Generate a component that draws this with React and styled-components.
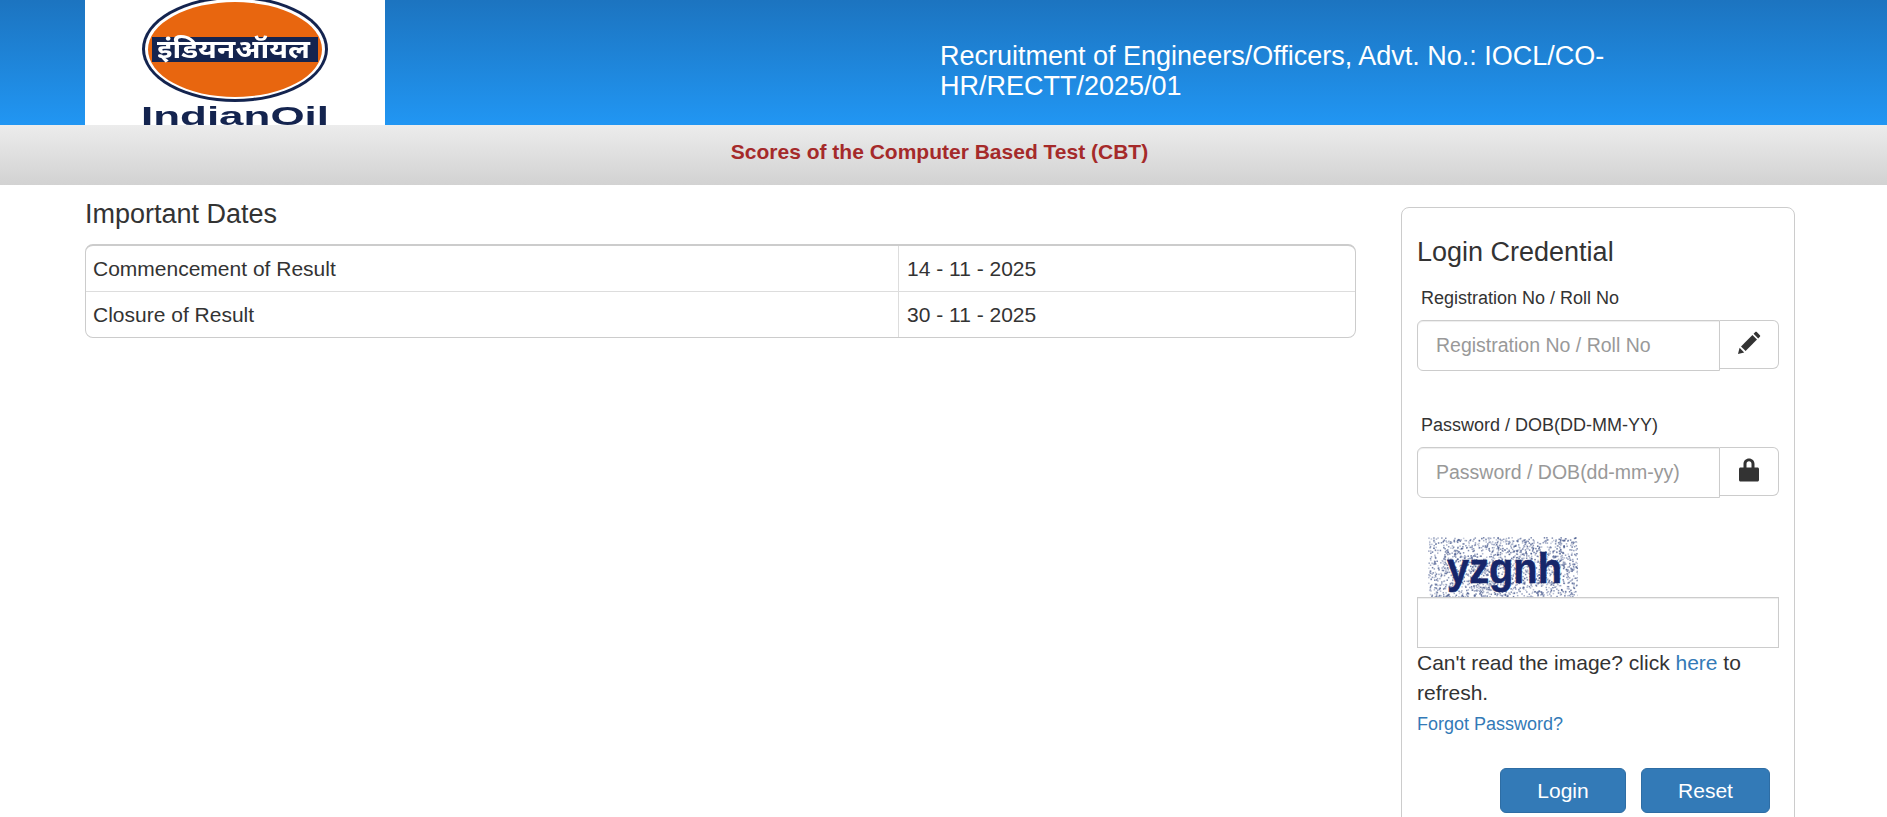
import React from 'react';
import styled, { createGlobalStyle } from 'styled-components';

const GlobalStyle = createGlobalStyle`
  html, body {
    margin: 0;
    padding: 0;
    background: #fff;
    color: #333;
    font-family: "Liberation Sans", Arial, sans-serif;
    overflow: hidden;
  }
  * {
    box-sizing: border-box;
  }
`;

const Header = styled.header`
  display: flex;
  height: 125px;
  padding-left: 85px;
  background: linear-gradient(to bottom, #1c74c0, #2196f3);
`;

const LogoBox = styled.div`
  width: 300px;
  height: 125px;
  overflow: hidden;
  background: #fff;

  svg {
    display: block;
    filter: blur(0.4px);
  }
`;

const Title = styled.h1`
  width: 700px;
  margin: 41px 0 0 555px;
  font-size: 27px;
  font-weight: normal;
  line-height: 30px;
  color: #fff;
`;

const Band = styled.div`
  height: 60px;
  padding-right: 8px;
  line-height: 54px;
  text-align: center;
  font-size: 21px;
  font-weight: bold;
  color: #a52a2a;
  background: linear-gradient(to bottom, #ececec, #d2d2d2);
`;

const Content = styled.main`
  display: grid;
  grid-template-columns: 1271px 394px;
  column-gap: 45px;
  padding: 15px 0 0 85px;
`;

const SectionTitle = styled.h2`
  margin: 0 0 16px;
  font-size: 27px;
  font-weight: normal;
  line-height: 28px;
  color: #333;
`;

const DatesTable = styled.div`
  border: 1px solid #ccc;
  border-top-width: 2px;
  border-radius: 8px;
  overflow: hidden;
`;

const DateRow = styled.div`
  display: grid;
  grid-template-columns: 812px 1fr;
  height: ${(p) => (p.$first ? '45px' : '46px')};
  font-size: 21px;
  line-height: 45px;
  border-top: ${(p) => (p.$first ? 'none' : '1px solid #ddd')};
`;

const DateCell = styled.div`
  padding-left: ${(p) => (p.$value ? '8px' : '7px')};
  border-left: ${(p) => (p.$value ? '1px solid #ddd' : 'none')};
`;

const Panel = styled.aside`
  height: 700px;
  margin-top: 7px;
  padding: 29px 15px 0;
  border: 1px solid #ccc;
  border-radius: 8px;
`;

const PanelTitle = styled.h2`
  margin: 0 0 21px;
  font-size: 27px;
  font-weight: normal;
  line-height: 30px;
`;

const FieldLabel = styled.label`
  display: block;
  margin: 0 0 12px 4px;
  font-size: 18px;
  line-height: 20px;
`;

const InputGroup = styled.div`
  display: flex;
  margin-bottom: 44px;
`;

const TextInput = styled.input`
  flex: 1;
  min-width: 0;
  height: 51px;
  padding: 0 18px;
  border: 1px solid #ccc;
  border-radius: 6px 0 0 6px;
  font-family: inherit;
  font-size: 19.5px;
  color: #555;
  box-shadow: inset 0 1px 1px rgba(0, 0, 0, 0.075);
  &::placeholder {
    color: #999;
    opacity: 1;
  }
`;

const Addon = styled.span`
  display: flex;
  align-items: center;
  justify-content: center;
  width: 59px;
  height: 49px;
  padding-bottom: 3px;
  border: 1px solid #ccc;
  border-left: none;
  border-radius: 0 6px 6px 0;
  background: #fff;
`;

const CaptchaImage = styled.svg`
  display: block;
  margin: -5px 0 0 11px;
`;

const CaptchaInput = styled.input`
  display: block;
  width: 100%;
  height: 51px;
  border: 1px solid #ccc;
  box-shadow: inset 0 1px 1px rgba(0, 0, 0, 0.075);
`;

const HelpText = styled.p`
  margin: 0;
  font-size: 21px;
  line-height: 30px;
`;

const TextLink = styled.a`
  color: #337ab7;
  text-decoration: none;
`;

const ForgotLink = styled(TextLink)`
  display: block;
  margin-top: 3px;
  font-size: 18px;
  line-height: 26px;
`;

const Actions = styled.div`
  display: flex;
  justify-content: flex-end;
  gap: 15px;
  margin-top: 31px;
  padding-right: 9px;
`;

const ActionButton = styled.button`
  width: ${(p) => p.$width}px;
  height: 45px;
  border: 1px solid #2e6da4;
  border-radius: 6px;
  background: #337ab7;
  color: #fff;
  font-family: inherit;
  font-size: 21px;
`;

function Logo() {
  return (
    <svg width="300" height="125" viewBox="0 0 300 125">
      <ellipse cx="150" cy="49" rx="93" ry="53" fill="#14244f" />
      <ellipse cx="150" cy="49" rx="90" ry="50" fill="#fff" />
      <ellipse cx="150" cy="49.500" rx="87" ry="47.500" fill="#e8660f" />
      <rect x="67" y="37" width="166" height="25" fill="#14244f" />
      <text
        x="72"
        y="58"
        textLength="153"
        lengthAdjust="spacingAndGlyphs"
        fontFamily="'Noto Sans Devanagari', 'Noto Sans', 'Liberation Sans', sans-serif"
        fontSize="25"
        fontWeight="700"
        fill="#fff"
      >
        इंडियनऑयल
      </text>
      <text
        x="56"
        y="125"
        textLength="188"
        lengthAdjust="spacingAndGlyphs"
        fontFamily="'Liberation Sans', sans-serif"
        fontSize="26"
        fontWeight="700"
        fill="#14244f"
      >
        IndianOil
      </text>
    </svg>
  );
}

function PencilIcon() {
  return (
    <svg width="24" height="24" viewBox="0 0 24 24" fill="#333">
      <path d="M1 23l1.600-6.200 4.600 4.600z" />
      <path d="M4 15.400L15.400 4l4.600 4.600L8.600 20z" />
      <path d="M16.600 2.800l1.700-1.700c.5-.5 1-.5 1.500 0l3.100 3.100c.5.5.5 1 0 1.500l-1.700 1.700z" />
    </svg>
  );
}

function LockIcon() {
  return (
    <svg width="20" height="24" viewBox="0 0 20 24" fill="#333">
      <path d="M1.500 9.500h3V6C4.500 2.800 6.800.5 10 .5s5.500 2.300 5.500 5.500v3.500h3c.8 0 1.500.7 1.500 1.500v11c0 .8-.7 1.500-1.500 1.500h-17C.7 23.500 0 22.800 0 22V11c0-.8.7-1.500 1.500-1.500zM7.500 9.500h5V6c0-1.600-1-2.700-2.500-2.700S7.500 4.400 7.500 6z" />
    </svg>
  );
}

// fixed seed so the noise stays the same on every load
function makeNoise(count) {
  let seed = 1337;
  const next = () => {
    seed = (seed * 16807) % 2147483647;
    return seed / 2147483647;
  };
  return Array.from({ length: count }, () => ({
    x: next() * 150,
    y: next() * 60,
    o: 0.3 + next() * 0.5,
  }));
}

const noise = makeNoise(1700);

function Captcha() {
  return (
    <CaptchaImage width="150" height="60" viewBox="0 0 150 60">
      {noise.map((d, i) => (
        <rect key={i} x={d.x} y={d.y} width="1.500" height="1.500" fill="#4a5c8f" opacity={d.o} />
      ))}
      <text
        x="19"
        y="46"
        textLength="115"
        lengthAdjust="spacingAndGlyphs"
        fontFamily="'Liberation Sans', sans-serif"
        fontSize="43"
        fontWeight="700"
        stroke="#16266a"
        strokeWidth="0.6"
        fill="#16266a"
      >
        yzgnh
      </text>
    </CaptchaImage>
  );
}

const dates = [
  { label: 'Commencement of Result', value: '14 - 11 - 2025' },
  { label: 'Closure of Result', value: '30 - 11 - 2025' },
];

export default function App() {
  return (
    <>
      <GlobalStyle />
      <Header>
        <LogoBox>
          <Logo />
        </LogoBox>
        <Title>Recruitment of Engineers/Officers, Advt. No.: IOCL/CO-HR/RECTT/2025/01</Title>
      </Header>
      <Band>Scores of the Computer Based Test (CBT)</Band>
      <Content>
        <section>
          <SectionTitle>Important Dates</SectionTitle>
          <DatesTable>
            {dates.map((row, index) => (
              <DateRow key={row.label} $first={index === 0}>
                <DateCell>{row.label}</DateCell>
                <DateCell $value>{row.value}</DateCell>
              </DateRow>
            ))}
          </DatesTable>
        </section>
        <Panel>
          <PanelTitle>Login Credential</PanelTitle>
          <FieldLabel>Registration No / Roll No</FieldLabel>
          <InputGroup>
            <TextInput placeholder="Registration No / Roll No" />
            <Addon>
              <PencilIcon />
            </Addon>
          </InputGroup>
          <FieldLabel>Password / DOB(DD-MM-YY)</FieldLabel>
          <InputGroup>
            <TextInput placeholder="Password / DOB(dd-mm-yy)" />
            <Addon>
              <LockIcon />
            </Addon>
          </InputGroup>
          <Captcha />
          <CaptchaInput />
          <HelpText>
            Can't read the image? click <TextLink href="#">here</TextLink> to refresh.
          </HelpText>
          <ForgotLink href="#">Forgot Password?</ForgotLink>
          <Actions>
            <ActionButton $width={126}>Login</ActionButton>
            <ActionButton $width={129}>Reset</ActionButton>
          </Actions>
        </Panel>
      </Content>
    </>
  );
}
